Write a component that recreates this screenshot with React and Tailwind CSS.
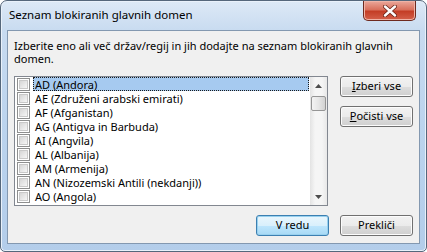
import React from 'react';

const items = [
  'AD (Andora)',
  'AE (Združeni arabski emirati)',
  'AF (Afganistan)',
  'AG (Antigva in Barbuda)',
  'AI (Angvila)',
  'AL (Albanija)',
  'AM (Armenija)',
  'AN (Nizozemski Antili (nekdanji))',
  'AO (Angola)',
];

function Checkbox() {
  return (
    <div className="w-[13px] h-[13px] border border-[#8e8f8f] bg-white p-[1px] shrink-0">
      <div className="w-full h-full border border-[#c9c9c9] bg-gradient-to-br from-[#d6d6d6] to-[#f6f6f6]" />
    </div>
  );
}

function WinButton({ children, primary }) {
  return (
    <button
      className={
        'w-[73px] h-[21px] rounded-[3px] border text-[11px] text-black flex items-center justify-center ' +
        (primary
          ? 'border-[#3c7fb1] bg-[linear-gradient(#eaf6fd_0%,#d9f0fc_50%,#bee6fd_51%,#a7d9f5_100%)] shadow-[inset_0_0_0_1px_#98d1ef]'
          : 'border-[#707070] bg-[linear-gradient(#f2f2f2_0%,#ebebeb_50%,#dddddd_51%,#cfcfcf_100%)] shadow-[inset_0_0_0_1px_#fcfcfc]')
      }
    >
      {children}
    </button>
  );
}

function ScrollArrow({ down }) {
  return (
    <div className="w-[17px] h-[17px] flex items-center justify-center">
      <svg width="7" height="4" viewBox="0 0 7 4">
        {down ? (
          <path d="M0 0 H7 L3.5 4 Z" fill="#4d4d4d" />
        ) : (
          <path d="M0 4 H7 L3.5 0 Z" fill="#4d4d4d" />
        )}
      </svg>
    </div>
  );
}

export default function App() {
  return (
    <div
      className="w-[427px] h-[252px] flex flex-col border border-[#55677b] rounded-t-[7px] rounded-b-[5px] overflow-hidden bg-[linear-gradient(#dde9f6_0px,#c8dbf0_30px,#bcd4ee_120px,#b3cdea_252px)] shadow-[inset_0_0_0_1px_#e9f1fa]"
      style={{ fontFamily: '"Noto Sans", "Open Sans", sans-serif' }}
    >
      <div className="h-[29px] flex items-start shrink-0">
        <div className="pl-[8px] pt-[6px] text-[11.5px] text-black leading-[16px]">Seznam blokiranih glavnih domen</div>
        <div className="ml-auto mr-[10px] w-[53px] h-[20px] rounded-b-[5px] border border-t-0 border-[#6e2a1f] bg-[linear-gradient(#eba89b_0%,#d9715d_45%,#c43e26_55%,#d4604a_100%)] shadow-[inset_0_0_0_1px_#efb3a6] flex items-center justify-center">
          <svg width="14" height="12" viewBox="0 0 14 12">
            <path d="M2 1.5 L12 10.5 M12 1.5 L2 10.5" stroke="#6a2418" strokeWidth="4" strokeLinecap="round" />
            <path d="M2 1.5 L12 10.5 M12 1.5 L2 10.5" stroke="#ffffff" strokeWidth="2.4" strokeLinecap="round" />
          </svg>
        </div>
      </div>

      <div className="flex-1 mx-[6px] mb-[7px] border border-[#8398b0] bg-[#f0f0f0] flex flex-col pl-[6px] pr-[6px]">
        <p className="pt-[8px] text-[11px] leading-[13px] text-black pr-[2px]">
          Izberite eno ali več držav/regij in jih dodajte na seznam blokiranih glavnih domen.
        </p>

        <div className="mt-[11px] flex items-start">
          <div className="w-[315px] h-[130px] border border-[#828790] bg-white flex">
            <div className="flex-1 flex flex-col">
              {items.map((it, i) => (
                <div key={it} className="h-[14px] flex items-center pl-[2px]">
                  <Checkbox />
                  <div
                    className={
                      'ml-[3px] mr-[1px] h-[14px] flex-1 pl-[1px] text-[11px] leading-[13px] text-black whitespace-nowrap ' +
                      (i === 0 ? 'bg-[#a6caf0] border border-dotted border-[#1a1a1a]' : 'border border-transparent')
                    }
                  >
                    {it}
                  </div>
                </div>
              ))}
            </div>
            <div className="w-[17px] h-full flex flex-col bg-[linear-gradient(90deg,#e3e3e3,#f5f5f5_30%,#f5f5f5_70%,#e8e8e8)]">
              <ScrollArrow />
              <div className="mt-[2px] mx-[1px] h-[15px] rounded-[2px] border border-[#959595] bg-[linear-gradient(90deg,#f3f3f3,#e6e6e6_50%,#d2d2d2)]" />
              <div className="flex-1" />
              <ScrollArrow down />
            </div>
          </div>

          <div className="ml-[12px] flex flex-col gap-[9px]">
            <WinButton>
              <span><span className="underline">I</span>zberi vse</span>
            </WinButton>
            <WinButton>
              <span><span className="underline">P</span>očisti vse</span>
            </WinButton>
          </div>
        </div>

        <div className="mt-[9px] flex justify-end gap-[11px]">
          <WinButton primary>V redu</WinButton>
          <WinButton>Prekliči</WinButton>
        </div>
      </div>
    </div>
  );
}
